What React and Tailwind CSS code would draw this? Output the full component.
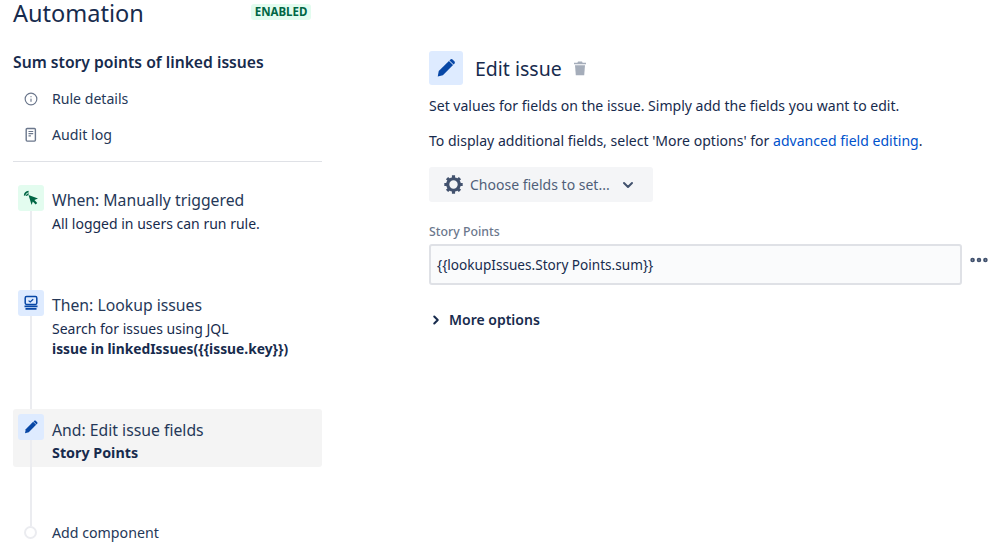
import React from 'react';
import { Info, ChevronDown, ChevronRight, MoreHorizontal } from 'lucide-react';

const font = "font-['Noto_Sans',sans-serif]";

const PencilIcon = ({ size = 16, color = '#0747a6' }) => (
  <svg width={size} height={size} viewBox="0 0 24 24" fill={color}>
    <path d="M15.2 4.3 19.7 8.8 8.6 19.9 3 21.4 4.1 15.4Z" />
    <path d="M16.6 2.9c.8-.8 2-.8 2.8 0l1.7 1.7c.8.8.8 2 0 2.8l-.8.9-4.5-4.5Z" />
  </svg>
);

const CursorIcon = () => (
  <svg width="16" height="16" viewBox="0 0 16 16" fill="#006644">
    <path d="M5.5 5 15 8.4 11.4 10 14.2 13 12.6 14.6 9.8 11.5 8.6 15Z" />
    <path d="M1.6 5.6C1.8 3.4 3.4 1.8 5.6 1.6" fill="none" stroke="#006644" strokeWidth="1.6" />
    <path d="M3.6 6C3.7 4.8 4.6 3.9 5.8 3.8" fill="none" stroke="#006644" strokeWidth="1.3" />
  </svg>
);

const LookupIcon = () => (
  <svg width="16" height="16" viewBox="0 0 16 16">
    <rect x="2.2" y="1.5" width="11.6" height="8" rx="1.4" fill="none" stroke="#0747a6" strokeWidth="1.5" />
    <path d="M5.6 5.6 7.2 7l3-2.8" fill="none" stroke="#0747a6" strokeWidth="1.2" />
    <path d="M1.5 10.5h13v1.8h-13zM2.5 13h11v1.8h-11z" fill="#0747a6" />
  </svg>
);

const AuditIcon = () => (
  <svg width="16" height="16" viewBox="0 0 16 16" fill="none">
    <rect x="3.2" y="1.5" width="9.2" height="12.6" rx="1" stroke="#6b778c" strokeWidth="1.4" />
    <path d="M5.5 4.5h4.7M5.5 6.7h4.7M5.5 8.9h2.4" stroke="#6b778c" strokeWidth="1.2" />
  </svg>
);

const TrashIcon = () => (
  <svg width="14" height="15" viewBox="0 0 14 15" fill="#a5adba">
    <path d="M5 0.5h4l.6 1.2H13v1.5H1V1.7h3.4Z" />
    <path d="M2 4.2h10l-.8 10H2.8Z" />
  </svg>
);

const GearIcon = () => (
  <svg width="21" height="21" viewBox="0 0 24 24" fill="none" stroke="#42526e" strokeWidth="3.6">
    <circle cx="12" cy="12" r="6.6" />
    <path strokeWidth="3.6" d="M12 1.5v4M12 18.5v4M1.5 12h4M18.5 12h4M4.6 4.6l2.8 2.8M16.6 16.6l2.8 2.8M4.6 19.4l2.8-2.8M16.6 7.4l2.8-2.8" />
  </svg>
);

const Step = ({ icon, iconBg, title, active, height, children }) => (
  <div className={`flex ${height}`}>
    <div className="flex w-[26px] shrink-0 flex-col items-center">
      <div className={`flex h-[26px] w-[26px] items-center justify-center rounded-[3px] ${iconBg}`}>{icon}</div>
      <div className="w-[2px] flex-1 bg-[#ebecf0]" />
    </div>
    <div className={`ml-[8px] ${active ? 'pt-[5px]' : 'pt-[4px]'}`}>
      <div className="text-[15.75px] leading-[22px] text-[#253858]">{title}</div>
      {children}
    </div>
  </div>
);

export default function App() {
  return (
    <div className={`${font} flex h-[551px] w-[999px] overflow-hidden bg-white text-[#172b4d]`}>
      {/* left column */}
      <div className="ml-[13px] w-[309px] shrink-0">
        <div className="flex h-[26px] items-center">
          <h1 className="text-[23.5px] leading-[26px] text-[#172b4d]">Automation</h1>
          <span className="ml-[107px] mb-[3px] rounded-[3px] bg-[#e3fcef] px-[4px] text-[11.5px] font-bold leading-[16px] text-[#006644]">ENABLED</span>
        </div>
        <h2 className="mt-[25px] text-[15.7px] font-semibold leading-[22px]">Sum story points of linked issues</h2>
        <div className="mt-[15px] flex h-[22px] items-center pl-[11px] text-[#253858]">
          <Info size={14} color="#6b778c" strokeWidth={2} />
          <span className="ml-[14px] text-[14.1px]">Rule details</span>
        </div>
        <div className="mt-[14px] flex h-[22px] items-center pl-[10px] text-[#253858]">
          <AuditIcon />
          <span className="ml-[13px] text-[14.2px]">Audit log</span>
        </div>
        <div className="mt-[15px] h-[1px] bg-[#dfe1e6]" />

        <div className="mt-[23px] pl-[5px]">
          <Step height="h-[105px]" iconBg="bg-[#e3fcef]" icon={<CursorIcon />} title="When: Manually triggered">
            <div className="mt-[3px] text-[14px] leading-[20px] text-[#172b4d]">All logged in users can run rule.</div>
          </Step>
          <Step height="h-[119px]" iconBg="bg-[#deebff]" icon={<LookupIcon />} title="Then: Lookup issues">
            <div className="mt-[3px] text-[14px] leading-[20px]">Search for issues using JQL</div>
            <div className="text-[13.8px] font-bold leading-[20px]">issue in linkedIssues({'{{'}issue.key{'}}'})</div>
          </Step>
          <div className="-ml-[5px] h-[58px] rounded-[3px] bg-[#f4f4f4] pl-[5px] pt-[5px]">
            <Step height="h-[53px]" active iconBg="bg-[#deebff]" icon={<PencilIcon size={16} />} title="And: Edit issue fields">
              <div className="mt-[2px] text-[14.3px] font-bold leading-[20px]">Story Points</div>
            </Step>
          </div>
          <div className="flex h-[59px] w-[26px] justify-center">
            <div className="w-[2px] bg-[#ebecf0]" />
          </div>
          <div className="flex h-[13px] items-center">
            <div className="ml-[6px] h-[13px] w-[13px] rounded-full border-2 border-[#ebecf0] bg-white" />
            <span className="ml-[15px] text-[14.2px] text-[#253858]">Add component</span>
          </div>
        </div>
      </div>

      {/* right column */}
      <div className="ml-[107px] w-[560px] shrink-0 pt-[50px]">
        <div className="flex items-center">
          <div className="flex h-[34px] w-[34px] items-center justify-center rounded-[3px] bg-[#deebff]">
            <PencilIcon size={22} />
          </div>
          <span className="ml-[12px] pt-[2px] text-[19.5px] leading-[34px] text-[#172b4d]">Edit issue</span>
          <span className="ml-[11px] flex"><TrashIcon /></span>
        </div>
        <p className="mt-[10px] text-[14.05px] leading-[20px]">Set values for fields on the issue. Simply add the fields you want to edit.</p>
        <p className="mt-[15px] text-[14.05px] leading-[20px]">
          To display additional fields, select 'More options' for <span className="text-[#0052cc]">advanced field editing</span>.
        </p>
        <button className="mt-[16px] flex h-[35px] w-[224px] items-center rounded-[3px] bg-[#f4f5f7] pl-[14px] text-[14px] text-[#505f79]">
          <GearIcon />
          <span className="ml-[6px]">Choose fields to set...</span>
          <ChevronDown size={16} color="#42526e" strokeWidth={3} className="ml-[10px]" />
        </button>
        <div className="mt-[20px] text-[12.3px] font-medium leading-[20px] text-[#6b778c]">Story Points</div>
        <div className="mt-[2px] flex items-center">
          <div className="flex h-[41px] w-[533px] shrink-0 items-center rounded-[3px] border-2 border-[#dfe1e6] bg-[#fafbfc] pl-[6px] pt-[2px] text-[13.6px]">
            {'{{'}lookupIssues.Story Points.sum{'}}'}
          </div>
          <MoreHorizontal size={22} color="#42526e" strokeWidth={3} className="ml-[6px] mb-[9px] shrink-0" />
        </div>
        <div className="mt-[24px] flex items-center text-[14px] font-semibold">
          <ChevronRight size={14} color="#172b4d" strokeWidth={3.5} />
          <span className="ml-[6px]">More options</span>
        </div>
      </div>
    </div>
  );
}
